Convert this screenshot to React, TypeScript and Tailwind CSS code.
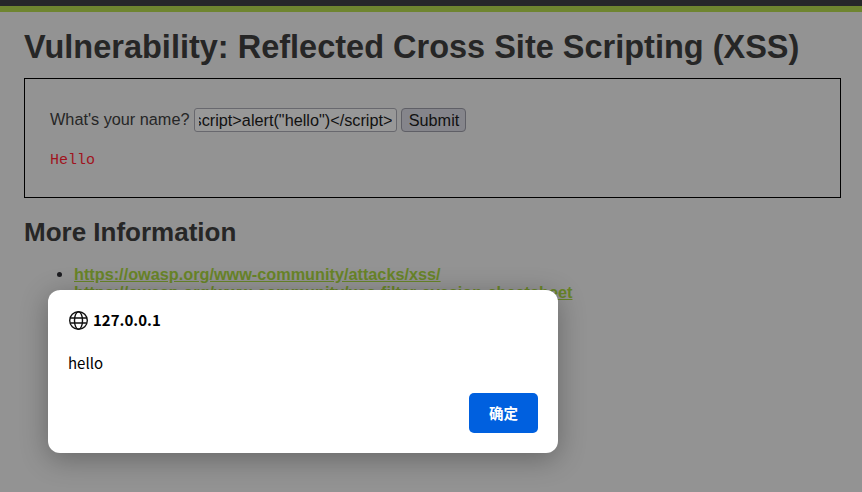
export default function App() {
  return (
    <div className="relative h-[492px] w-[862px] overflow-hidden bg-[#939393] font-['Liberation_Sans',Arial,sans-serif] text-[#262626]">
      <div className="h-[6px] bg-[#27272a]" />
      <div className="h-[6px] bg-[#6f8530]" />
      <div className="px-[24px] pr-[21px]">
        <h1 className="mt-[15px] text-[32.5px] font-bold leading-[40px]">Vulnerability: Reflected Cross Site Scripting (XSS)</h1>
        <div className="mt-[11px] h-[120px] border border-black pl-[25px] pt-[29px]">
          <div className="flex h-[24px] items-center text-[16.25px] leading-[22px]">
            <span className="pb-[2px]">What's your name?</span>
            <div className="ml-[5px] flex h-[24px] w-[203px] items-center rounded-[3px] border border-[#68686e] bg-[#989898] px-[4px] text-[#111]">
              <div className="flex w-full justify-end overflow-hidden pb-[1px]">
                <span className="whitespace-nowrap">&lt;script&gt;alert("hello")&lt;/script&gt;</span>
              </div>
            </div>
            <button className="ml-[4px] h-[24px] w-[65px] rounded-[4px] border border-[#5f5f66] bg-[#85858b] pb-[2px] text-[16.25px] text-[#111]">Submit</button>
          </div>
          <pre className="mt-[20px] font-['Liberation_Mono',monospace] text-[15px] leading-[18px] text-[#a0141e]">Hello</pre>
        </div>
        <h2 className="mt-[19px] text-[26px] font-bold leading-[30px]">More Information</h2>
        <ul className="mt-[18px] list-disc pl-[50px] text-[16.25px] font-bold leading-[18px] text-[#688428] underline marker:text-[#1c1c20]">
          <li>https://owasp.org/www-community/attacks/xss/</li>
          <li>https://owasp.org/www-community/xss-filter-evasion-cheatsheet</li>
        </ul>
      </div>
      <div className="absolute left-[48px] top-[290px] flex h-[163px] w-[510px] flex-col rounded-[12px] bg-white px-[20px] pt-[18px] font-['Noto_Sans_CJK_SC','Noto_Sans',sans-serif] text-black shadow-[0_6px_28px_rgba(0,0,0,0.3)]">
        <div className="flex h-[24px] items-center gap-[4px]">
          <svg width="21" height="21" viewBox="0 0 21 21" fill="none" stroke="#111" strokeWidth="1.4">
            <circle cx="10.5" cy="10.5" r="8.8" />
            <ellipse cx="10.5" cy="10.5" rx="4" ry="8.8" />
            <path d="M2.5 8h16M2.5 13h16" />
          </svg>
          <span className="text-[15px] font-bold">127.0.0.1</span>
        </div>
        <p className="mt-[20px] text-[15px] leading-[22px]">hello</p>
        <div className="mt-[19px] flex justify-end">
          <button className="h-[40px] w-[69px] rounded-[5px] bg-[#0060df] text-[14.5px] font-bold text-white">确定</button>
        </div>
      </div>
    </div>
  );
}
